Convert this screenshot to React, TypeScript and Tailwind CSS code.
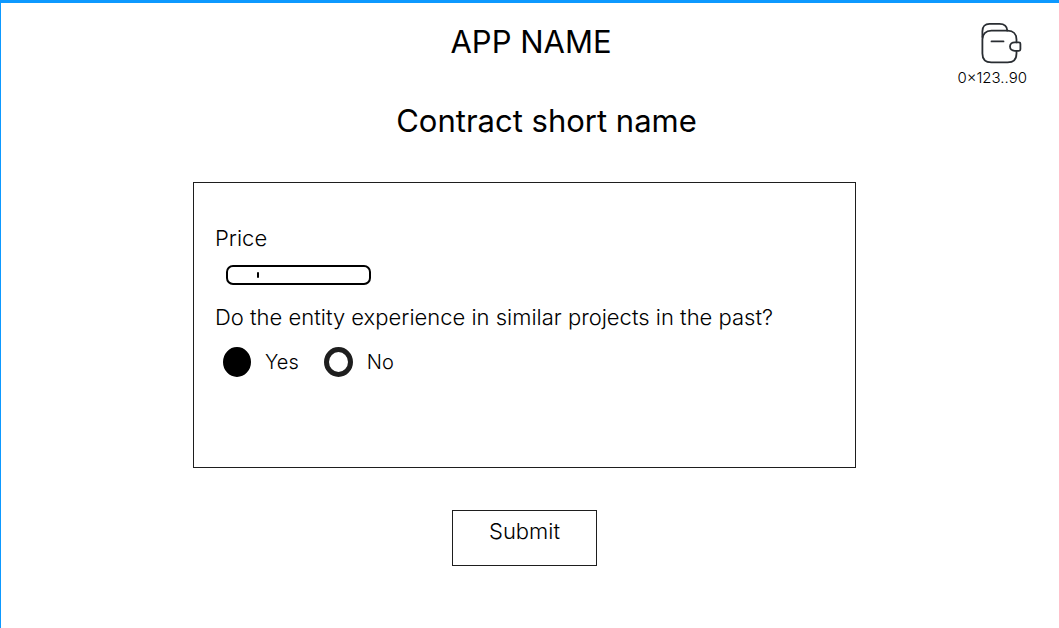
import { useState } from "react";

function WalletIcon() {
  return (
    <svg
      width="42"
      height="42"
      viewBox="0 0 42 42"
      fill="none"
      stroke="#292d32"
      strokeWidth="1.8"
      strokeLinecap="round"
      strokeLinejoin="round"
      aria-hidden="true"
    >
      <path d="M2.4 15V9.2C2.4 4.5 5 1.9 9.5 1.9H19.5C24 1.9 27 4.2 27.3 8.6" />
      <path d="M36.5 20.3V17.5C36.5 12 33.4 8.7 27.6 8.7H11.4C5.6 8.7 2.4 12 2.4 17.5V31.5C2.4 37.2 5.6 40.4 11.4 40.4H27.6C33.4 40.4 36.5 37.2 36.5 31.5V28.8" />
      <path d="M11.5 19.4H23.5" />
      <path d="M40.4 21.8V27.3C40.4 28.2 39.8 28.8 38.9 28.8H34.7C32 28.8 30 27 30 24.6C30 22.1 32 20.3 34.7 20.3H38.9C39.8 20.3 40.4 20.9 40.4 21.8Z" />
    </svg>
  );
}

const radioClass =
  "m-0 h-[30px] w-[29px] appearance-none rounded-[50%] border-[5px] border-[#1e1e1e] bg-white checked:w-7 checked:border-black checked:bg-black";

export default function App() {
  const [price, setPrice] = useState("");
  const [answer, setAnswer] = useState("yes");

  return (
    <div className="min-h-screen border-t-[3px] border-l border-[#0d99ff] bg-white font-['Inter',sans-serif] font-light text-black">
      <header className="grid grid-cols-[1fr_auto_1fr] items-start pt-[19px] pr-8">
        <h1 className="col-start-2 pl-[34px] text-[31px] leading-10 font-normal">APP NAME</h1>
        <div className="flex flex-col items-end justify-self-end">
          <div className="pr-[5px]">
            <WalletIcon />
          </div>
          <span className="mt-1 text-[15px] leading-5">0×123..90</span>
        </div>
      </header>

      <main className="flex flex-col items-center pr-[11px] pb-10">
        <h2 className="mt-[13px] pl-11 text-[31px] leading-10 font-normal">Contract short name</h2>

        <form
          className="mt-[41px] flex w-full flex-col items-center"
          onSubmit={(event) => event.preventDefault()}
        >
          <div className="w-full max-w-[663px] border border-[#1e1e1e] px-[21px] pt-[39px] pb-[90px]">
            <label htmlFor="price" className="block text-[22px] leading-8">
              Price
            </label>
            <div className="relative mt-[11px] ml-[11px] w-[145px]">
              <input
                id="price"
                type="text"
                value={price}
                onChange={(event) => setPrice(event.target.value)}
                className="block h-5 w-full rounded-[7px] border-2 border-black bg-white px-8 text-xs outline-none"
              />
              <span className="pointer-events-none absolute top-[7px] left-[31px] h-[6px] w-[2px] rounded-full bg-black" />
            </div>

            <fieldset className="mt-4">
              <legend className="text-[22px] leading-8">
                Do the entity experience in similar projects in the past?
              </legend>
              <div className="mt-[14px] ml-2 flex items-center gap-[25px] text-xl leading-[30px]">
                <label className="flex items-center gap-[14px]">
                  <input
                    type="radio"
                    name="experience"
                    checked={answer === "yes"}
                    onChange={() => setAnswer("yes")}
                    className={radioClass}
                  />
                  Yes
                </label>
                <label className="flex items-center gap-[14px]">
                  <input
                    type="radio"
                    name="experience"
                    checked={answer === "no"}
                    onChange={() => setAnswer("no")}
                    className={radioClass}
                  />
                  No
                </label>
              </div>
            </fieldset>
          </div>

          <button
            type="submit"
            className="mt-[42px] w-[145px] border border-[#1e1e1e] bg-white pt-1 pb-[18px] text-[22px] leading-8"
          >
            Submit
          </button>
        </form>
      </main>
    </div>
  );
}
